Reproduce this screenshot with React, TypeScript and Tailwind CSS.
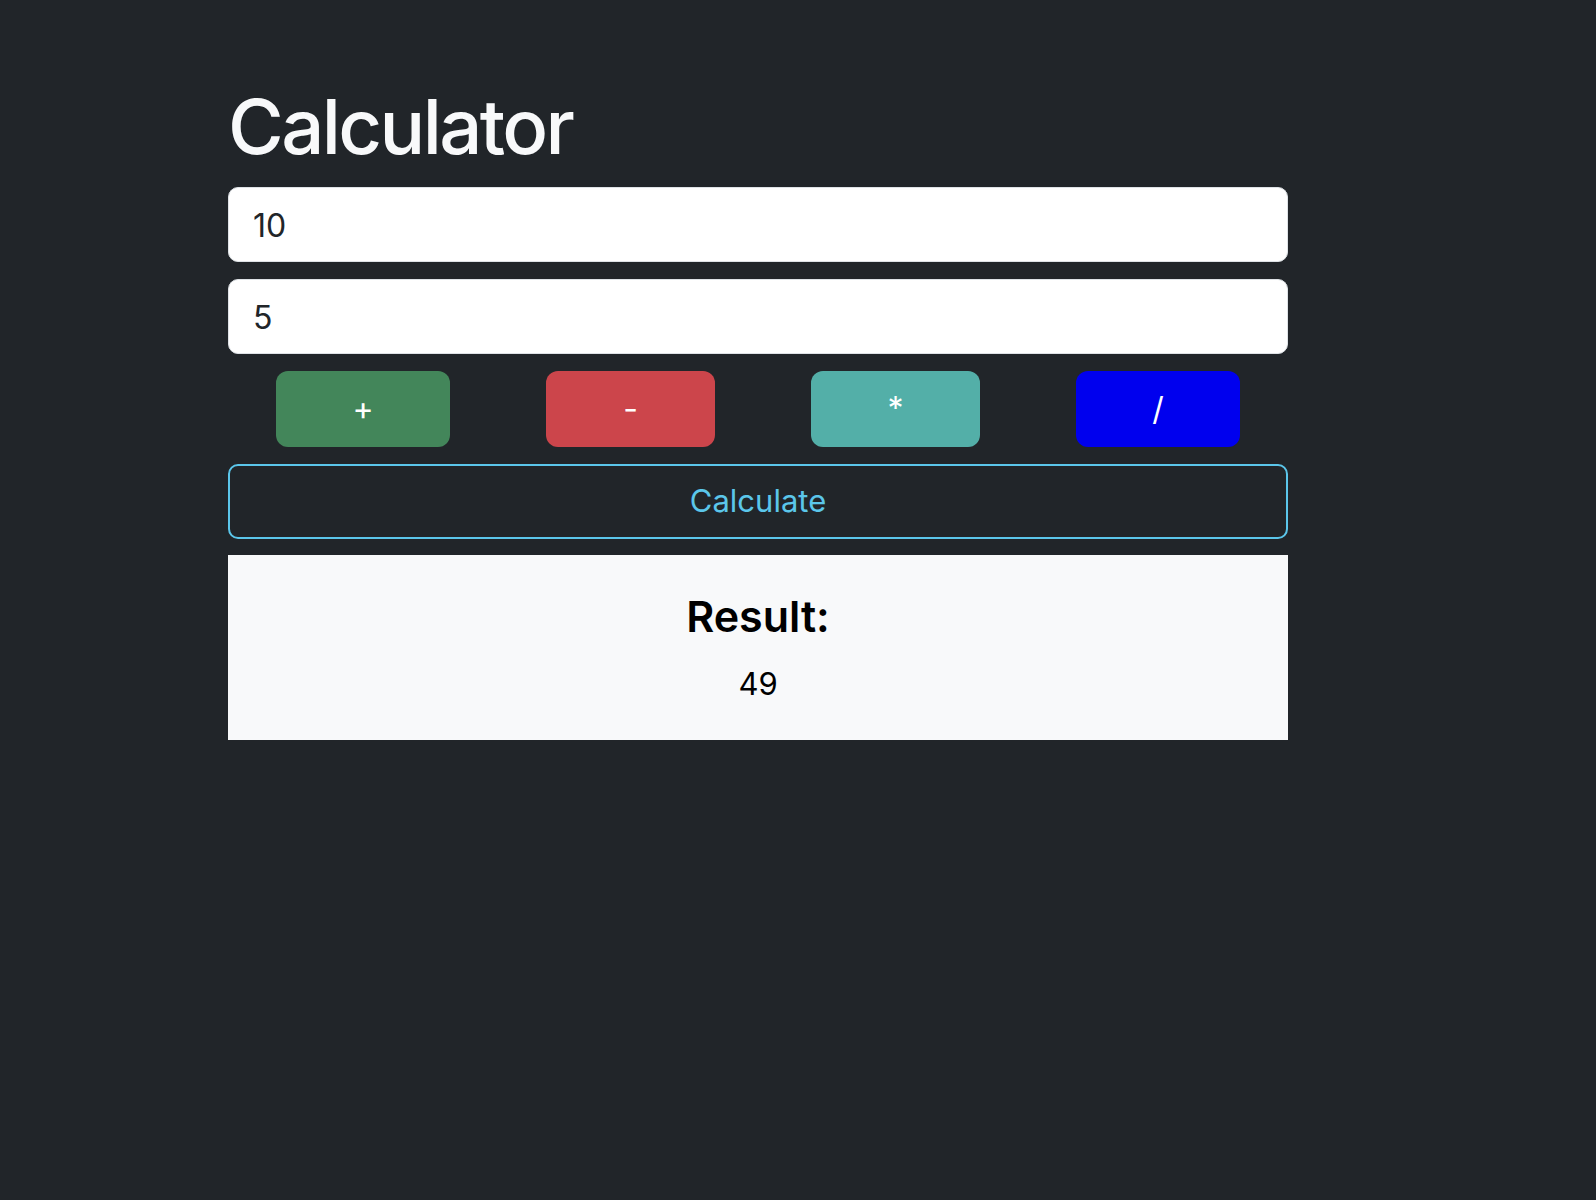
import React from "react";

export default function App() {
  return (
    <div className="min-h-screen w-full bg-[#212529] font-['Inter','Noto_Sans',sans-serif]">
      <div className="ml-[228px] w-[1060px] pt-[88px] flex flex-col">
        <h1 className="text-[76px] leading-[76px] font-medium text-[#f8f9fa] tracking-[-2.6px]">Calculator</h1>
        <input
          readOnly
          defaultValue="10"
          className="mt-[23px] h-[75px] w-full rounded-[10px] border border-[#dee2e6] bg-white px-[24px] pt-[2px] text-[32px] text-[#212529] outline-none"
        />
        <input
          readOnly
          defaultValue="5"
          className="mt-[17px] h-[75px] w-full rounded-[10px] border border-[#dee2e6] bg-white px-[24px] pt-[2px] text-[32px] text-[#212529] outline-none"
        />
        <div className="mt-[17px] flex h-[76px] justify-around">
          <button className="h-[76px] w-[174px] rounded-[12px] bg-[#43865a] text-[32px] text-white">+</button>
          <button className="h-[76px] w-[169px] rounded-[12px] bg-[#cc454b] text-[32px] text-white">-</button>
          <button className="h-[76px] w-[169px] rounded-[12px] bg-[#53afa8] text-[32px] text-white">*</button>
          <button className="h-[76px] w-[164px] rounded-[12px] bg-[#0000ee] text-[32px] text-white">/</button>
        </div>
        <button className="mt-[17px] h-[75px] w-full rounded-[10px] border-2 border-[#5bc6ea] bg-transparent text-[31px] text-[#5bc6ea]">
          Calculate
        </button>
        <div className="mt-[16px] flex h-[185px] flex-col items-center bg-[#f8f9fa] pt-[35px]">
          <h3 className="text-[43px] leading-[52px] font-semibold text-black">Result:</h3>
          <p className="mt-[20px] text-[31px] leading-[43px] text-black">49</p>
        </div>
      </div>
    </div>
  );
}
